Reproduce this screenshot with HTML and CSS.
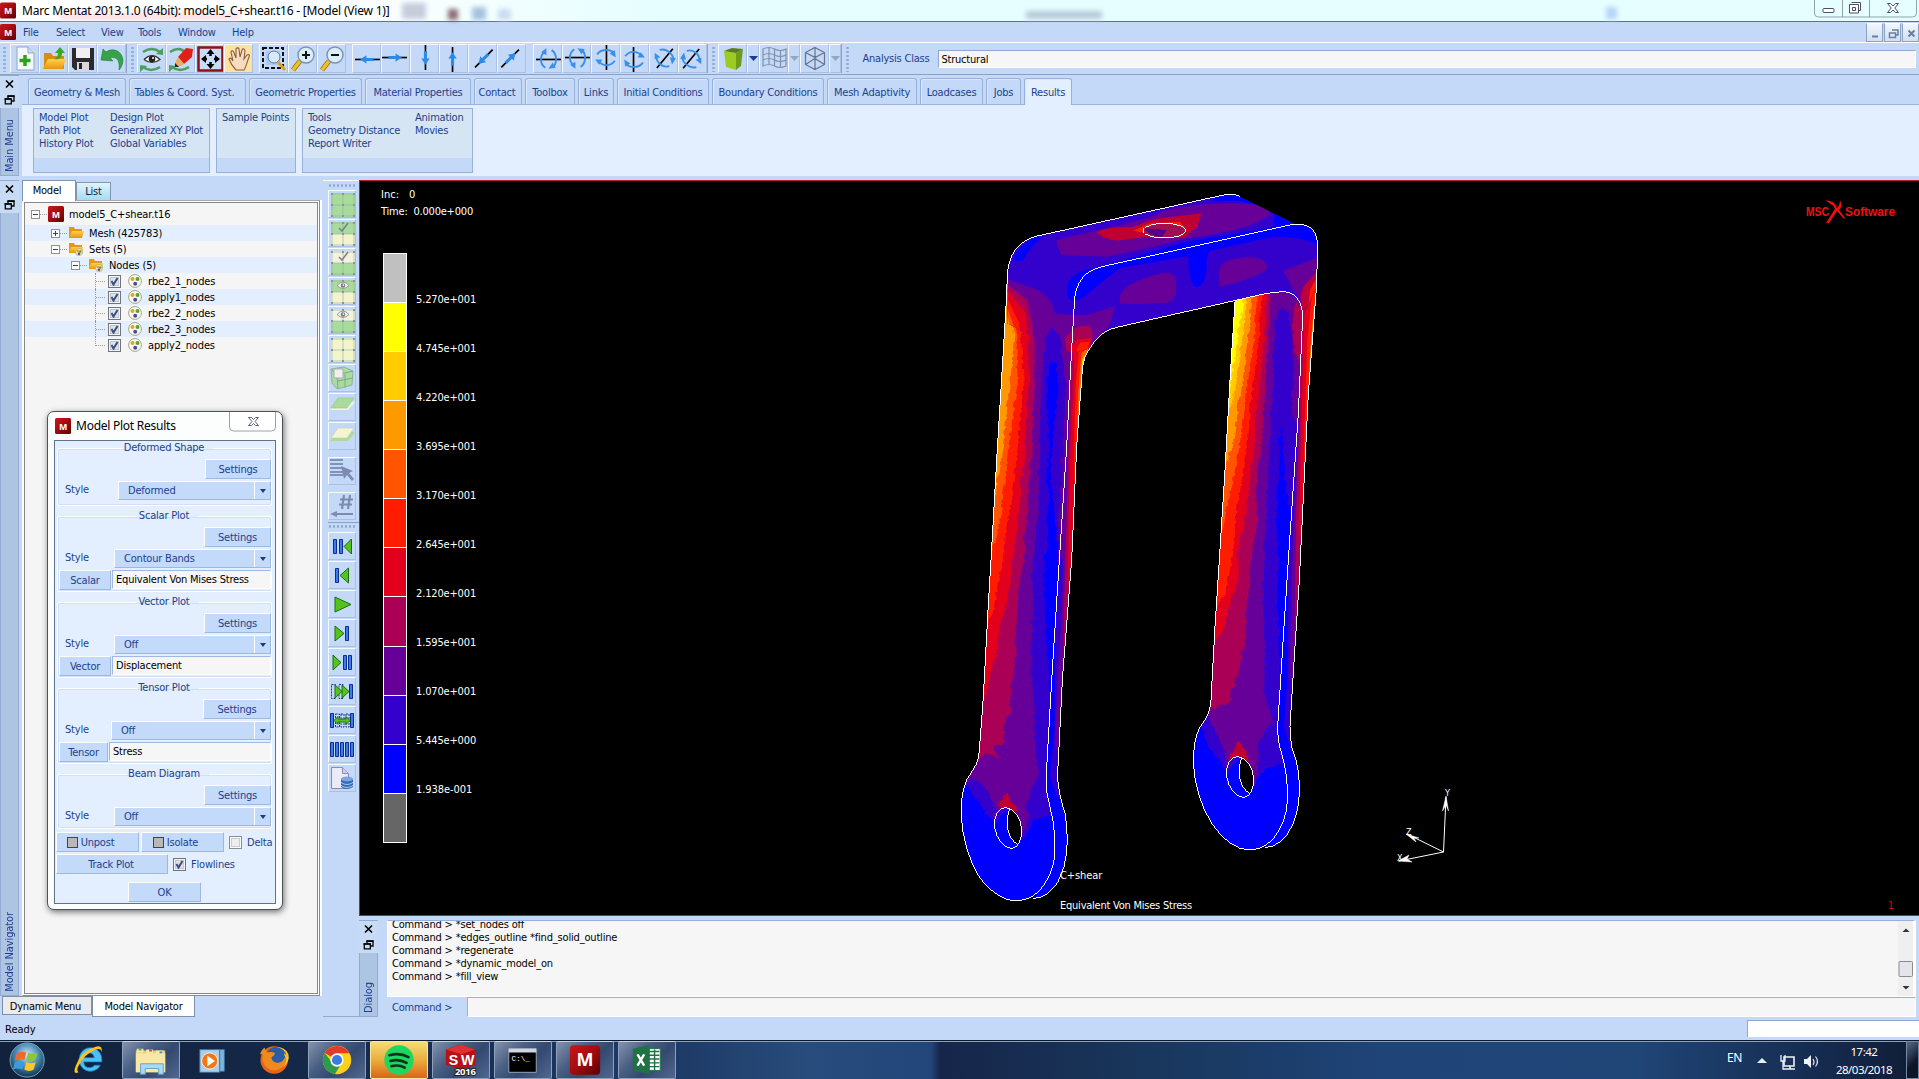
FILE: index.html
```html
<!DOCTYPE html>
<html lang="en">
<head>
<meta charset="utf-8">
<title>Marc Mentat 2013.1.0</title>
<link rel="stylesheet" href="styles.css">
</head>
<body>
<svg class="defs" width="0" height="0">
  <defs>
    <linearGradient id="gRed" x1="0" y1="0" x2="1" y2="1"><stop offset="0" stop-color="#c81818"/><stop offset=".45" stop-color="#a80c10"/><stop offset="1" stop-color="#5c0006"/></linearGradient>
    <linearGradient id="gFolder" x1="0" y1="0" x2="0" y2="1"><stop offset="0" stop-color="#ffd24a"/><stop offset="1" stop-color="#e8940e"/></linearGradient>
    <radialGradient id="gOrb" cx=".5" cy=".35" r=".65"><stop offset="0" stop-color="#cfe8f2"/><stop offset=".5" stop-color="#4c8fb8"/><stop offset="1" stop-color="#0d3350"/></radialGradient>
    <symbol id="m" viewBox="0 0 16 16"><rect width="16" height="16" rx="1.5" fill="url(#gRed)"/><text x="8" y="11.6" text-anchor="middle" font-family="Liberation Sans" font-weight="bold" font-size="9.5" fill="#fff">M</text></symbol>
    <symbol id="restore" viewBox="0 0 10 10"><path d="M3.5 3V1h6v5h-2M.8 3.8h6v5h-6z" fill="none" stroke="#000" stroke-width="1.3"/><path d="M3 1.2h7M0 4h7" stroke="#000" stroke-width="1.6"/></symbol>
    <symbol id="close" viewBox="0 0 10 10"><path d="M1.5 1.5l7 7M8.5 1.5l-7 7" stroke="#000" stroke-width="1.6"/></symbol>
    <symbol id="tick" viewBox="0 0 13 13"><rect x=".5" y=".5" width="12" height="12" fill="#f3f3f3" stroke="#70757e"/><rect x="2.5" y="2.5" width="8" height="8" fill="#dfe2e6" stroke="#c3c7cd"/><path d="M3.5 6l2 3.5L9.5 3" fill="none" stroke="#3c4f82" stroke-width="2"/></symbol>
    <symbol id="untick" viewBox="0 0 13 13"><rect x=".5" y=".5" width="12" height="12" fill="#fafafa" stroke="#8a8e94"/><rect x="2.5" y="2.5" width="8" height="8" fill="#eee" stroke="#c9cdd2"/></symbol>
    <symbol id="minus" viewBox="0 0 9 9"><rect x=".5" y=".5" width="8" height="8" fill="#fff" stroke="#919191"/><path d="M2 4.5h5" stroke="#345"/></symbol>
    <symbol id="plus" viewBox="0 0 9 9"><rect x=".5" y=".5" width="8" height="8" fill="#fff" stroke="#919191"/><path d="M2 4.5h5M4.500 2v5" stroke="#345"/></symbol>
    <symbol id="folder" viewBox="0 0 16 14"><path d="M1 12V1h5l1 2h7v9z" fill="#e29a14"/><path d="M1 12L4 5h12l-2 7z" fill="url(#gFolder)"/></symbol>
    <symbol id="folderset" viewBox="0 0 16 14"><path d="M1 11V1h5l1 2h7v8z" fill="#e29a14"/><path d="M1 11L3 5h12l-1 6z" fill="url(#gFolder)"/><circle cx="11" cy="10" r="3.6" fill="#eee6c0" stroke="#b8a860" stroke-width=".7"/><circle cx="9.800" cy="9" r="1.200" fill="#d8a018"/><circle cx="12.300" cy="9.500" r="1.200" fill="#5a9a3a"/><circle cx="11" cy="11.800" r="1.200" fill="#5540a0"/></symbol>
    <symbol id="nodes" viewBox="0 0 14 14"><circle cx="7" cy="7" r="6.400" fill="#fbfbf2" stroke="#a0a488" stroke-width="1"/><circle cx="4.500" cy="5" r="2" fill="#dca81c"/><circle cx="9.500" cy="5" r="2" fill="#57a03a"/><circle cx="7.200" cy="9.700" r="2" fill="#5048a8"/></symbol>
    <symbol id="ax" viewBox="0 0 26 26"><path d="M1 13h24" stroke="#000" stroke-width="1.600"/><path d="M6 13l6-4v2.500h7v3h-7V17z" fill="#2c8ae8"/></symbol>
    <symbol id="rot" viewBox="0 0 26 26"><path d="M1 13h24" stroke="#000" stroke-width="1.600"/><path d="M10 21C4 17 5 9 9 6M16 4c5 3 6 12 1 17" fill="none" stroke="#3a90e8" stroke-width="1.800"/><path d="M11 2v7L6 6z" fill="#3a90e8"/><path d="M13 22l4-6 3 5z" fill="#3a90e8"/></symbol>
    <symbol id="grid" viewBox="0 0 24 24"><path d="M1 1h22v22H1zM12 1v22M1 12h22" fill="none" stroke="#8fb49c" stroke-width=".6"/><path d="M0 0h2v2H0zM11 0h2v2h-2zM22 0h2v2h-2zM0 11h2v2H0zM11 11h2v2h-2zM22 11h2v2h-2zM0 22h2v2H0zM11 22h2v2h-2zM22 22h2v2h-2z" fill="#8a92ae"/></symbol>
    <symbol id="eye" viewBox="0 0 14 8"><path d="M0 4q7-8 14 0q-7 7-14 0" fill="#f4f4f4" stroke="#8c8c8c"/><circle cx="7" cy="4" r="2.600" fill="#777"/><circle cx="7.500" cy="3.500" r="1" fill="#fff"/></symbol>
  </defs>
</svg>

<header class="title">
  <svg class="m16"><use href="#m"/></svg><span>Marc Mentat 2013.1.0 (64bit): model5_C+shear.t16 - [Model (View 1)]</span>
  <i class="ghost g1"></i><i class="ghost g2"></i><i class="ghost g3"></i><i class="ghost g4"></i><i class="ghost g7"></i><i class="ghost g5"></i><i class="ghost g6"></i>
  <svg class="winbtns" width="103" height="18" viewBox="0 0 103 18"><path d="M.5 0v13q0 4 4 4h94q4 0 4-4V0M28.500 0v17M55.500 0v17" fill="none" stroke="#8fa3a8"/><rect x="9" y="8.500" width="11" height="4" rx="1" fill="#fff" stroke="#4a4f66"/><path d="M37.500 2.500h9v8h-2M35.500 4.500h9v8.500h-9zM38.500 7.500h3v3h-3z" fill="#fff" stroke="#4a4f66"/><path d="M73.500 3.500h3l2.500 2.500 2.500-2.500h3L80.800 8l3.700 4.500h-3L79 10l-2.500 2.500h-3L77.200 8z" fill="#fff" stroke="#4a4f66"/></svg>
</header>

<nav class="menu">
  <svg class="m16"><use href="#m"/></svg>
  <span class="mi1">File</span><span class="mi2">Select</span><span class="mi3">View</span><span class="mi4">Tools</span><span class="mi5">Window</span><span class="mi6">Help</span>
  <div class="mdi">
    <svg width="17" height="19"><path d="M5 12.500h6" stroke="#6b7f9c" stroke-width="2"/></svg>
    <svg width="17" height="19"><path d="M7 6h6v5h-2M4.500 9h6v4.500h-6z" fill="none" stroke="#6b7f9c" stroke-width="1.500"/></svg>
    <svg width="17" height="19"><path d="M5.500 6.500l6 6M11.500 6.500l-6 6" stroke="#6b7f9c" stroke-width="2"/></svg>
  </div>
</nav>

<div class="toolbar">
  <i class="grip first"></i>
  <div class="tg">
    <svg class="tb"><path d="M6 2h11l6 6v17H6z" fill="#f4f8fd" stroke="#8ea6c8"/><path d="M17 2v6h6" fill="#cfdcf0" stroke="#8ea6c8"/><path d="M14 10v11M8.500 15.500h11" stroke="#2fa01c" stroke-width="3.500"/></svg>
    <svg class="tb"><path d="M4 24V8h7l2 3h11v13z" fill="#d98d10"/><path d="M3 24l5-10h18l-4 10z" fill="url(#gFolder)"/><path d="M14 14c3-1 4-3 4-6h-3l5-6 5 6h-3c0 5-3 7-8 6z" fill="#3aa62c"/></svg>
    <svg class="tb"><path d="M3 3h22v22H6l-3-3z" fill="#2b2b2f"/><path d="M7 3h14v10H7z" fill="#f0f0f2"/><path d="M8 17h12v8H8z" fill="#d8d8dc"/><path d="M10 18h3v6h-3z" fill="#222"/></svg>
    <svg class="tb"><path d="M3 15L5 4l3 3C15 2 24 6 25 15c0 4-2 8-4 10 1-8-1-14-9-12l3 3z" fill="#38a24a" stroke="#1e7a34" stroke-width=".6"/></svg>
  </div>
  <i class="grip"></i>
  <div class="tg">
    <svg class="tb"><path d="M5 7q9-6 17 0M22 22q-9 6-17 0" fill="none" stroke="#4aa060" stroke-width="2.500"/><path d="M25 3v7l-7-1zM2 27v-7l7 1z" fill="#4aa060"/><path d="M6 14.500q8-8 16 0q-8 6-16 0" fill="#fff" stroke="#333" stroke-width="1.200"/><circle cx="14" cy="14" r="3.300" fill="#222"/><circle cx="15" cy="13" r="1" fill="#fff"/></svg>
    <svg class="tb"><path d="M3 7q9-6 15 0M22 22q-9 6-17 0" fill="none" stroke="#4aa060" stroke-width="2.500"/><path d="M2 27v-7l7 1z" fill="#4aa060"/><path d="M11 12l8-9 7 1-1 8-8 7z" fill="#e02018"/><path d="M11 12l6 7-5 3H8v-4z" fill="#e8b060"/><path d="M8 18v4h4z" fill="#222"/></svg>
    <svg class="tb"><rect x="2.500" y="2.500" width="24" height="23" fill="#c9dcf6" stroke="#8c1018" stroke-width="2.500"/><path d="M14.500 4l4 5h-8zM14.500 24l4-5h-8zM5 14l5-4v8zM24 14l-5-4v8z" fill="#000"/><path d="M14.500 8v3M14.500 17v3M9 14h2M18 14h2" stroke="#000" stroke-width="2.500"/></svg>
    <svg class="tb on"><path d="M11 25c-3-3-6-8-7-11 1-2 3 0 4 2L6 7c1-2 3-1 3 1l2 5V4c1-2 3-1 3 0l1 8 2-7c1-2 3-1 3 1l-1 8 3-4c2-1 3 0 2 2-2 5-3 10-5 13z" fill="#f8dcc0" stroke="#8a6040" stroke-width="1.100"/></svg>
    <i class="gap6"></i>
    <svg class="tb"><path d="M3 3h20v20H3z" fill="none" stroke="#111" stroke-width="2" stroke-dasharray="4 2"/><rect x="6" y="6" width="14" height="14" fill="#a9c9f4"/><circle cx="14" cy="12" r="6" fill="#d8eafa" stroke="#5a7aa8"/><path d="M18 17l7 8" stroke="#e0a020" stroke-width="3"/></svg>
    <svg class="tb"><path d="M11 16l-7 9" stroke="#a07010" stroke-width="5"/><path d="M11 16l-7 9" stroke="#f0c020" stroke-width="3.500"/><circle cx="17" cy="10" r="8" fill="#dceefa" stroke="#7a94b0" stroke-width="1.400"/><path d="M17 6v8M13 10h8" stroke="#111" stroke-width="2"/></svg>
    <svg class="tb"><path d="M11 16l-7 9" stroke="#a07010" stroke-width="5"/><path d="M11 16l-7 9" stroke="#f0c020" stroke-width="3.500"/><circle cx="17" cy="10" r="8" fill="#dceefa" stroke="#7a94b0" stroke-width="1.400"/><path d="M13 10h8" stroke="#111" stroke-width="2"/></svg>
    <i class="gap6"></i>
    <svg class="tb" viewBox="-1 -1 28 28"><use href="#ax"/></svg>
    <svg class="tb" viewBox="-1 -1 28 28"><use href="#ax" transform="rotate(180 13 13)"/></svg>
    <svg class="tb" viewBox="-1 -1 28 28"><use href="#ax" transform="rotate(-90 13 13)"/></svg>
    <svg class="tb" viewBox="-1 -1 28 28"><use href="#ax" transform="rotate(90 13 13)"/></svg>
    <svg class="tb" viewBox="-1 -1 28 28"><use href="#ax" transform="rotate(-45 13 13)"/></svg>
    <svg class="tb" viewBox="-1 -1 28 28"><use href="#ax" transform="rotate(135 13 13)"/></svg>
    <i class="gap6 w7"></i>
    <svg class="tb" viewBox="-1 -1 28 28"><use href="#rot"/></svg>
    <svg class="tb" viewBox="-1 -1 28 28"><use href="#rot" transform="matrix(1 0 0 -1 0 26)"/></svg>
    <svg class="tb" viewBox="-1 -1 28 28"><use href="#rot" transform="rotate(-90 13 13)"/></svg>
    <svg class="tb" viewBox="-1 -1 28 28"><use href="#rot" transform="rotate(90 13 13)"/></svg>
    <svg class="tb" viewBox="-1 -1 28 28"><use href="#rot" transform="rotate(-50 13 13)"/></svg>
    <svg class="tb" viewBox="-1 -1 28 28"><use href="#rot" transform="rotate(130 13 13)"/></svg>
  </div>
  <i class="grip"></i>
  <div class="tg">
    <svg class="tb"><path d="M5 6l12 2v17l-10-3z" fill="#9ccc24"/><path d="M17 8l7-4-2 17-5 4z" fill="#6c9c18"/><path d="M5 6l8-3 11 1-7 4z" fill="#587c1c"/></svg>
    <svg class="td"><path d="M1 11h9l-4.500 5z" fill="#1c3c8c"/></svg>
    <svg class="tb"><path d="M3 4q6-3 11.500 0t11.500 0v17q-6 3-11.500 0T3 21zM9 3v17M14.500 4v17M20.500 5v17M3 10q6-3 11.500 0t11.500 0M3 15q6-3 11.500 0t11.500 0" fill="none" stroke="#8291aa" stroke-width="1.200"/></svg>
    <svg class="td"><path d="M1 11h9l-4.500 5z" fill="#98a4b8"/></svg>
    <svg class="tb"><path d="M14 2.500l9.500 5v12l-9.500 5-9.500-5v-12zM4.500 7.500l9.500 5 9.500-5M14 12.500v12M14 2.500v11l-9.500 6M14 13.500l9.500 6" fill="none" stroke="#66748c" stroke-width="1.200"/></svg>
    <svg class="td"><path d="M1 11h9l-4.500 5z" fill="#98a4b8"/></svg>
  </div>
  <i class="grip"></i>
  <label class="aclabel">Analysis Class</label><div class="acfield">Structural</div>
</div>

<section class="maindock">
  <aside class="side"><svg><use href="#close"/></svg><svg><use href="#restore"/></svg><b>Main Menu</b></aside>
  <div class="ribbon">
    <div class="tabs">
      <span class="t1">Geometry &amp; Mesh</span><span class="t2">Tables &amp; Coord. Syst.</span><span class="t3">Geometric Properties</span><span class="t4">Material Properties</span><span class="t5">Contact</span><span class="t6">Toolbox</span><span class="t7">Links</span><span class="t8">Initial Conditions</span><span class="t9">Boundary Conditions</span><span class="t10">Mesh Adaptivity</span><span class="t11">Loadcases</span><span class="t12">Jobs</span><span class="t13 active">Results</span>
    </div>
    <div class="groups">
      <div class="grp ga"><p>Model Plot<br>Path Plot<br>History Plot</p><p>Design Plot<br>Generalized XY Plot<br>Global Variables</p></div>
      <div class="grp gb"><p>Sample Points</p></div>
      <div class="grp gc"><p>Tools<br>Geometry Distance<br>Report Writer</p><p>Animation<br>Movies</p></div>
    </div>
  </div>
</section>

<main class="work">
  <section class="left">
    <div class="navrow">
      <aside class="side nav"><svg><use href="#close"/></svg><svg><use href="#restore"/></svg><b>Model Navigator</b></aside>
      <div class="navpanel">
        <div class="ntabs"><span class="n1">Model</span><span class="n2">List</span></div>
        <div class="treewrap"><div class="tree">
          <div class="row root"><svg class="ex"><use href="#minus"/></svg><i class="dot"></i><svg class="m16"><use href="#m"/></svg><span>model5_C+shear.t16</span></div>
          <div class="row l1 alt"><svg class="ex"><use href="#plus"/></svg><i class="dot"></i><svg class="fo"><use href="#folder"/></svg><span>Mesh (425783)</span></div>
          <div class="row l1"><svg class="ex"><use href="#minus"/></svg><i class="dot"></i><svg class="fo"><use href="#folderset"/></svg><span>Sets (5)</span></div>
          <div class="row l2 alt"><svg class="ex"><use href="#minus"/></svg><i class="dot"></i><svg class="fo"><use href="#folderset"/></svg><span>Nodes (5)</span></div>
          <div class="row l3"><i class="br"></i><svg class="ck"><use href="#tick"/></svg><svg class="nd"><use href="#nodes"/></svg><span>rbe2_1_nodes</span></div>
          <div class="row l3 alt"><i class="br"></i><svg class="ck"><use href="#tick"/></svg><svg class="nd"><use href="#nodes"/></svg><span>apply1_nodes</span></div>
          <div class="row l3"><i class="br"></i><svg class="ck"><use href="#tick"/></svg><svg class="nd"><use href="#nodes"/></svg><span>rbe2_2_nodes</span></div>
          <div class="row l3 alt"><i class="br"></i><svg class="ck"><use href="#tick"/></svg><svg class="nd"><use href="#nodes"/></svg><span>rbe2_3_nodes</span></div>
          <div class="row l3"><i class="br last"></i><svg class="ck"><use href="#tick"/></svg><svg class="nd"><use href="#nodes"/></svg><span>apply2_nodes</span></div>
        </div></div>
      </div>
    </div>
    <div class="btabs"><span class="b1">Dynamic Menu</span><span class="b2">Model Navigator</span></div>
  </section>

  <section class="tools">
    <i class="hgrip"></i>
    <svg class="vb"><rect x="2" y="2" width="24" height="24" fill="#a9dc9c"/><use href="#grid" x="2" y="2" width="24" height="24"/></svg>
    <svg class="vb"><rect x="2" y="2" width="24" height="12" fill="#a9dc9c"/><rect x="2" y="14" width="24" height="12" fill="#f4f2cf"/><use href="#grid" x="2" y="2" width="24" height="24"/><path d="M10 8l3 3 6-8" fill="none" stroke="#7a8088" stroke-width="1.500"/></svg>
    <svg class="vb"><rect x="2" y="2" width="24" height="12" fill="#f4f2dc"/><rect x="2" y="14" width="24" height="12" fill="#a9dc9c"/><use href="#grid" x="2" y="2" width="24" height="24"/><path d="M10 8l3 3 6-8" fill="none" stroke="#7a8088" stroke-width="1.500"/></svg>
    <svg class="vb"><rect x="2" y="2" width="24" height="12" fill="#a9dc9c"/><rect x="2" y="14" width="24" height="12" fill="#f4f2cf"/><use href="#grid" x="2" y="2" width="24" height="24"/><use href="#eye" x="8" y="4" width="12" height="7"/></svg>
    <svg class="vb"><rect x="2" y="2" width="24" height="12" fill="#f4f2dc"/><rect x="2" y="14" width="24" height="12" fill="#a9dc9c"/><use href="#grid" x="2" y="2" width="24" height="24"/><use href="#eye" x="8" y="4" width="12" height="7"/></svg>
    <svg class="vb"><rect x="2" y="2" width="24" height="24" fill="#f4f4cc"/><use href="#grid" x="2" y="2" width="24" height="24"/></svg>
    <svg class="vb"><path d="M2 4l13-2 9 4-1 14-15 4-5-6z" fill="#a9dc9c" stroke="#8fb49c"/><path d="M3 5l5 5 16-4M8 10l1 13M16 9v14M9 16l15-3" fill="none" stroke="#7fa88c"/><path d="M5 4h9v9H5z" fill="#f0f0ea" stroke="#aab"/></svg>
    <svg class="vb"><path d="M8 8h18l-7 8H1z" fill="#f4f4dc"/><path d="M9 4h16l-7 10H2z" fill="#a9dc9c" stroke="#94c48c" stroke-width=".6"/></svg>
    <svg class="vb"><path d="M8 9h18l-7 9H1z" fill="#a9dc9c"/><path d="M9 5h16l-7 10H2z" fill="#f4f4d4" stroke="#c8ccae" stroke-width=".6"/></svg>
    <i class="vs6"></i>
    <svg class="vb"><path d="M1 2h13M1 6h13M1 10h13M1 14h13M1 17h13" stroke="#8392ba" stroke-width="2"/><path d="M12 8l12 5-4 2 5 6-2 2-5-6-3 4z" fill="#7c8ab4"/></svg>
    <i class="vs6"></i>
    <svg class="vb"><path d="M15 2l-2 14M21 2l-2 14M11 6.500h13M10 11.500h13" stroke="#7c8ab4" stroke-width="2.200"/><path d="M1 21l7-3v2h16v2H8v2z" fill="#7c8ab4"/></svg>
    <i class="vline"></i><i class="hgrip h9"></i>
    <svg class="vb"><path d="M4.500 6.500h3v14h-3zM10.500 6.500h3v14h-3z" class="bl"/><path d="M22.500 6v15L15 13.500z" class="gr"/></svg>
    <svg class="vb"><path d="M6.500 6.500h3v14h-3z" class="bl"/><path d="M19.500 6v15L11 13.500z" class="gr"/></svg>
    <svg class="vb"><path d="M6 6v15l16-7.500z" class="gr"/></svg>
    <svg class="vb"><path d="M6 6v15l9-7.500z" class="gr"/><path d="M16.500 6.500h3v14h-3z" class="bl"/></svg>
    <svg class="vb"><path d="M4 6v15l8-7.500z" class="gr"/><path d="M14.500 6.500h3v14h-3zM19.500 6.500h3v14h-3z" class="bl"/></svg>
    <svg class="vb"><path d="M2.500 6.500h4v14h-4zM10 6.500h4v14h-4z" fill="none" stroke="#123a9c" stroke-dasharray="2 1"/><path d="M6 7v13l7-6.500zM13 7v13l7-6.500z" class="gr"/><path d="M20.500 6.500h3v14h-3z" class="bl"/></svg>
    <svg class="vb"><path d="M1.500 6.500h3v14h-3zM21.500 6.500h3v14h-3z" class="bl"/><path d="M6.500 7h4v13h-4zM12 7h3v13h-3zM17 7h3v13h-3z" fill="none" stroke="#123a9c" stroke-dasharray="2 1"/><path d="M5 13.500l4-4v2.500h8V9.500l4 4-4 4V15H9v2.500z" class="gr"/></svg>
    <svg class="vb"><path d="M1.500 6.500h3v14h-3zM6.500 6.500h3v14h-3zM11.500 6.500h3v14h-3zM16.500 6.500h3v14h-3zM21.500 6.500h3v14h-3z" class="bl"/></svg>
    <svg class="vb"><path d="M2.500 2.500h11l6 6v15h-17z" fill="#eceaf8" stroke="#8c88b8"/><path d="M13.500 2.500v6h6" fill="#d0cce8" stroke="#8c88b8"/><path d="M12 14v8q6 4 12 0v-8z" fill="#3468b8"/><ellipse cx="18" cy="14" rx="6" ry="2.500" fill="#7ca4e0"/><path d="M12 17.500q6 4 12 0M12 20.500q6 4 12 0" fill="none" stroke="#a8c8f0"/></svg>
  </section>

  <section class="right">
    <div class="view">
      <svg width="1559" height="734" viewBox="360 181 1559 734">
        <defs>
          <filter id="jag" x="-5%" y="-5%" width="110%" height="110%" color-interpolation-filters="sRGB"><feTurbulence type="turbulence" baseFrequency=".035" numOctaves="2" seed="4"/><feDisplacementMap in="SourceGraphic" scale="14" xChannelSelector="R" yChannelSelector="G"/></filter>
          <clipPath id="cL"><path d="M262 290L258 380L230 840L213 1140L204 1290L195 1460L188 1580L178 1710Q175 1745 162 1765L140 1800Q123 1840 123 1900Q128 2010 180 2095Q235 2163 290 2163Q345 2160 375 2110Q410 2060 405 1980Q403 1930 390 1880Q378 1840 378 1800L395 1500L418 1140L440 800L463 370L440 250L300 220Z"/></clipPath>
          <clipPath id="cLs"><path d="M463 370L440 800L418 1140L395 1500L378 1800Q378 1840 390 1880Q403 1930 405 1980Q410 2060 375 2110L340 2155Q400 2155 432 2060Q450 1990 435 1900Q412 1830 413 1780L427 1500L455 1140L470 800L487 570Q490 530 510 505Q540 452 590 442L600 380Z"/></clipPath>
          <clipPath id="cR"><path d="M945 362L930 600L915 870L898 1140L885 1340L873 1560Q872 1590 860 1612L838 1645Q820 1680 820 1750Q826 1850 875 1930Q930 2010 990 2010Q1045 2007 1075 1955Q1108 1900 1102 1820Q1100 1770 1085 1720Q1073 1690 1073 1640L1092 1340L1105 1140L1135 700L1148 410Q1145 335 1085 335L1040 340Z"/></clipPath>
          <clipPath id="cRs"><path d="M1148 410L1135 700L1105 1140L1092 1340L1073 1640Q1073 1690 1085 1720Q1100 1770 1102 1820Q1108 1900 1075 1955L1035 2003Q1090 2000 1120 1930Q1145 1870 1136 1780Q1130 1740 1115 1700Q1110 1670 1110 1640L1125 1400L1138 1200L1165 640L1188 340L1193 220L1080 220L1085 335Q1145 345 1148 410Z"/></clipPath>
          <clipPath id="cT"><path d="M264 290Q262 190 352 168L920 43Q945 40 960 50L1125 132Q1185 130 1192 185L1190 320L1148 410Q1145 335 1085 335L1040 340L590 442Q540 452 510 505L458 520L262 430Z"/></clipPath>
        </defs>
        <g transform="translate(920 180) scale(.33333)">
          <g clip-path="url(#cL)"><g filter="url(#jag)">
            <path d="M100 200H500V2200H100z" fill="#f90"/>
            <path d="M262 375L280 460L268 600L245 800L228 900L214 1000H100V2200H500V200H255z" fill="#f50"/>
            <path d="M262 350L285 440L290 600L262 800L240 1000L225 1060L205 1150H100V2200H500V200z" fill="#ff1c00"/>
            <path d="M262 335L298 430L308 600L290 800L270 960L252 1060L245 1140L232 1200L217 1290L195 1340H100V2200H500V200z" fill="#e3001c"/>
            <path d="M262 322L318 400L325 600L312 800L292 1000L275 1130L265 1210L250 1290L232 1360L232 1400L210 1480L190 1550H100V2200H500V200z" fill="#aa0055"/>
            <path d="M262 300L322 360L338 440L338 600L333 800L318 1000L308 1070L312 1120L295 1200L290 1280L280 1370L285 1420L268 1540L270 1590L250 1620V1685L215 1700L238 1730L195 1715L165 1745H100V2200H500V200z" fill="#609"/>
            <path d="M262 200V290L340 325Q390 340 405 400L500 410V200z" fill="#30c"/>
            <path d="M395 440L372 480L365 560L360 640L355 800L350 1000L335 1140L333 1200L338 1290L330 1400L333 1500L340 1620L345 1740L355 1770L330 1820L305 1900L300 1990L500 1980V1500L410 1140L425 800L435 600L410 470z" fill="#30c"/>
            <path d="M388 545L378 600L384 800L375 900L388 950L376 1010L380 1090L370 1140L372 1300L378 1420L388 1540L400 1500L418 1200L408 1100L405 1050L396 960L388 900L392 800L410 620L405 545z" fill="#00f"/>
            <path d="M155 1790L185 1810L225 1880L230 1940L150 1940L120 1820z" fill="#30c"/>
            <path d="M90 1770L145 1820L190 1895L215 1915L228 1950L305 1975L340 1915L385 1900L420 1890V2300H90z" fill="#00f"/>
            <path d="M225 1890L215 1895L225 1960H305L330 1900L300 1870z" fill="#609"/>
            <path d="M255 1833L238 1865L230 1895L294 1895L275 1858z" fill="#c00030"/>
          </g></g>
          <g clip-path="url(#cLs)">
            <path d="M370 350H620V2200H370z" fill="#30c"/>
            <path d="M375 1140L405 1340L403 1650L390 1790L420 1880L460 2000V2200H300V1140z" fill="#00f"/>
            <path d="M400 1850L470 1860V2170H330L380 1900z" fill="#00f"/>
            <path d="M410 420L585 378L570 430L510 510L490 560L455 1140L418 1720L405 1700L412 1500L425 1300L430 1140L400 1100z" fill="#609"/>
            <path d="M435 470Q470 430 510 440Q530 460 510 510L490 560L455 1140L440 1420L430 1400L436 1140L440 1000L448 700L450 560z" fill="#aa0055"/>
            <path d="M458 480L500 470L512 500L490 560L455 1140L444 1220L446 1000L452 800L462 570z" fill="#e3001c"/>
            <path d="M478 500L510 490L470 800L462 920L463 760L468 600z" fill="#ff1c00"/>
            <path d="M484 520L505 500L480 720L472 780L474 650z" fill="#f60"/>
            <path d="M486 540L500 520L480 660z" fill="#fc0"/>
          </g>
          <g clip-path="url(#cR)"><g filter="url(#jag)">
            <path d="M800 330H1160V2020H800z" fill="#ff0"/>
            <path d="M968 330L966 370L953 440L936 560L925 620H800V2100H1200V330z" fill="#fc0"/>
            <path d="M978 330L968 440L948 580L930 680L915 720H800V2100H1200V330z" fill="#f90"/>
            <path d="M992 330L985 440L965 600L940 760L925 830L905 860H800V2100H1200V330z" fill="#f50"/>
            <path d="M1008 330L1000 470L978 600L955 800L935 900L915 980L900 1060H800V2100H1200V330z" fill="#ff1c00"/>
            <path d="M1022 330L1015 470L995 620L975 800L962 900L945 1000L932 1130L925 1180L910 1240L880 1290H800V2100H1200V330z" fill="#e3001c"/>
            <path d="M1035 330L1028 480L1015 620L1000 780L985 900L975 1000L950 1110L950 1200L918 1290L905 1350L880 1380H800V2100H1200V330z" fill="#aa0055"/>
            <path d="M1047 330L1042 480L1030 640L1020 800L1005 940L1010 1010L990 1120L985 1210L975 1300L975 1360L955 1460L940 1520L925 1540L930 1560L890 1580L860 1590H800V2100H1200V330z" fill="#609"/>
            <path d="M1080 375L1060 420L1055 600L1045 800L1035 1000L1028 1140L1025 1250L1032 1400L1030 1540L1055 1620L1020 1670L1005 1740L1000 1830L1130 1800V800L1120 600L1105 400z" fill="#30c"/>
            <path d="M1158 380L1112 360L1105 420L1118 560L1110 700L1142 750z" fill="#609"/><path d="M1158 390L1125 365L1112 440L1122 510L1158 600z" fill="#aa0055"/>
            <path d="M1080 720L1072 900L1065 1010L1072 1140L1070 1280L1080 1480L1100 1400L1115 1040L1092 900z" fill="#00f"/>
            <path d="M858 1600L880 1650L915 1720L920 1800L850 1760L820 1640z" fill="#30c"/>
            <path d="M800 1600L845 1640L860 1690L895 1740L920 1775L1000 1800L1020 1780Q1050 1740 1120 1755V2100H800V1640z" fill="#00f"/>
            <path d="M921 1740L915 1780L925 1815H1001L1018 1740L990 1710z" fill="#609"/>
            <path d="M948 1680L935 1710L928 1742L990 1742L970 1700z" fill="#c00030"/>
          </g></g>
          <g clip-path="url(#cRs)">
            <path d="M1030 200H1200V2020H1030z" fill="#30c"/>
            <path d="M1060 1140L1105 1240L1102 1500L1092 1640L1110 1700L1150 1800V2020H1020V1140z" fill="#00f"/>
            <path d="M1200 235L1090 270L1115 320L1142 370L1135 700L1118 1100L1108 1500L1120 1500L1138 1200L1200 300z" fill="#609"/>
            <path d="M1200 270L1150 320L1140 400L1140 700L1128 1000L1124 1380L1138 1200L1200 300z" fill="#aa0055"/>
            <path d="M1200 265L1158 320L1152 420L1145 700L1136 1080L1160 1000L1200 300z" fill="#e3001c"/>
            <path d="M1200 270L1178 320L1162 480L1155 700L1150 880L1200 400z" fill="#ff1c00"/>
            <path d="M1200 310L1182 380L1170 520L1165 680L1200 440z" fill="#f80"/>
          </g>
          <g clip-path="url(#cT)">
            <path d="M250 30H1200V530H250z" fill="#30c"/>
            <path d="M240 290L340 325Q395 345 405 402L500 406L585 378L572 430L510 510L458 530H240z" fill="#609"/>
            <path d="M250 305L322 360L338 440V530H240z" fill="#aa0055"/><path d="M250 315L318 400L325 530H240z" fill="#e3001c"/><path d="M250 330L298 430L306 530H240z" fill="#ff1c00"/><path d="M250 350L282 440L286 530H240z" fill="#f50"/><path d="M250 365L268 430L272 530H240z" fill="#f90"/>
            <path d="M395 440L372 480L370 530H432L420 470z" fill="#30c"/>
            <path d="M435 480Q460 430 508 438Q532 465 500 530H440z" fill="#aa0055"/><path d="M452 500L475 478L512 475L500 530H452z" fill="#e3001c"/><path d="M470 510L480 488L508 485L500 530H470z" fill="#ff1c00"/>
            <path d="M285 245Q270 220 350 165L365 175Q330 200 310 240z" fill="#00f"/>
            <path d="M410 180Q540 150 680 115L740 90Q860 65 980 70Q1050 80 1050 103Q1000 150 800 175Q600 225 560 230L425 225Q410 200 410 180z" fill="#609"/>
            <path d="M530 160Q540 140 640 140L700 118L845 100L830 140L795 172L700 168L590 182Q555 178 530 160z" fill="#c00030"/>
            <path d="M640 152L690 130L780 125L800 150L780 172L700 174L680 160z" fill="#f42000"/>
            <path d="M1065 100L1125 132Q1185 130 1193 195Q1150 170 1060 170L870 212Q858 225 860 260Q860 310 830 322Q805 315 805 228L600 265Q540 310 500 345Q450 380 443 345Q430 280 520 265L800 185L1060 140z" fill="#00f"/>
            <path d="M860 20H960L1010 75L955 62L880 62z" fill="#00f"/>
            <path d="M600 370Q590 330 650 305Q750 260 765 290Q780 360 740 368Q640 375 600 370z" fill="#609"/>
            <path d="M900 320Q885 250 930 240Q1030 215 1043 262Q1030 290 900 320z" fill="#609"/>
            <path d="M1200 230L1090 272L1115 320L1142 370L1150 420H1200z" fill="#609"/><path d="M1200 265L1150 320L1142 350L1150 420H1200z" fill="#c00038"/><path d="M1200 275L1170 330L1160 420H1200z" fill="#ff1c00"/>
          </g>
          <ellipse cx="733" cy="152" rx="62" ry="21" fill="#a01050"/><path d="M675 145L740 150L725 172Q680 165 675 145" fill="#508"/>
          <path d="M255 1882Q222 1890 223 1940Q235 2000 275 2006Q305 2000 305 1950Q300 1890 255 1882M951 1729Q918 1737 919 1787Q931 1847 971 1853Q1001 1847 1001 1797Q996 1737 951 1729" fill="#00f"/>
          <path d="M255 1882Q222 1890 223 1940L240 1910L268 1884zM951 1729Q918 1737 919 1787L936 1757L964 1731z" fill="#30c"/>
          <path d="M270 1884Q262 1900 262 1940Q268 1980 293 1993Q305 1980 305 1945Q300 1905 270 1884z"/><path d="M966 1731Q958 1747 958 1787Q964 1827 989 1840Q1001 1827 1001 1792Q996 1752 966 1731z"/>
          <g fill="none" stroke="#fff" stroke-width="3" shape-rendering="crispEdges">
            <path d="M262 290L258 380L230 840L213 1140L204 1290L195 1460L188 1580L178 1710Q175 1745 162 1765L140 1800Q123 1840 123 1900Q128 2010 180 2095Q235 2163 290 2163Q345 2160 375 2110Q410 2060 405 1980Q403 1930 390 1880Q378 1840 378 1800L395 1500L418 1140L440 800L452 560L463 370Q465 275 555 258L1100 137Q1185 118 1192 185L1193 220L1188 340L1165 640L1138 1200L1125 1400L1110 1640Q1110 1670 1115 1700Q1130 1740 1136 1780Q1145 1870 1120 1930Q1090 2000 1035 2003"/>
            <path d="M262 290Q265 190 352 168L920 43Q945 40 960 50"/>
            <path d="M340 2155Q400 2155 432 2060Q450 1990 435 1900Q412 1830 413 1780L427 1500L455 1140L470 800L487 570Q490 530 510 505Q540 452 590 442L1040 340L1085 335Q1145 335 1148 410L1135 700L1105 1140L1092 1340L1073 1640Q1073 1690 1085 1720Q1100 1770 1102 1820Q1108 1900 1075 1955Q1045 2007 990 2010Q930 2010 875 1930Q826 1850 820 1750Q820 1680 838 1645L860 1612Q872 1590 873 1560L885 1340L898 1140L915 870L930 600L945 365"/>
            <ellipse cx="733" cy="152" rx="64" ry="22"/>
            <path d="M255 1882Q222 1890 223 1940Q235 2000 275 2006Q305 2000 305 1950Q300 1890 255 1882M270 1884Q262 1900 262 1940Q268 1980 293 1993"/>
            <path d="M951 1729Q918 1737 919 1787Q931 1847 971 1853Q1001 1847 1001 1797Q996 1737 951 1729M966 1731Q958 1747 958 1787Q964 1827 989 1840"/>
          </g>
        </g>
        <g stroke="#fff" shape-rendering="crispEdges">
          <rect x="383.500" y="253.500" width="23" height="49" fill="#c0c0c0"/><rect x="383.500" y="302.500" width="23" height="49" fill="#ff0"/><rect x="383.500" y="351.500" width="23" height="49" fill="#fc0"/><rect x="383.500" y="400.500" width="23" height="49" fill="#f90"/><rect x="383.500" y="449.500" width="23" height="49" fill="#f50"/><rect x="383.500" y="498.500" width="23" height="49" fill="#ff1c00"/><rect x="383.500" y="547.500" width="23" height="49" fill="#e3001c"/><rect x="383.500" y="596.500" width="23" height="50" fill="#aa0055"/><rect x="383.500" y="646.500" width="23" height="49" fill="#609"/><rect x="383.500" y="695.500" width="23" height="49" fill="#30c"/><rect x="383.500" y="744.500" width="23" height="49" fill="#00f"/><rect x="383.500" y="793.500" width="23" height="49" fill="#666"/>
        </g>
        <g class="vt">
          <text x="381" y="198" textLength="18">Inc:</text><text x="409" y="198">0</text><text x="381" y="215" textLength="92">Time:&#160; 0.000e+000</text>
          <text x="416" y="303" textLength="60">5.270e+001</text><text x="416" y="352" textLength="60">4.745e+001</text><text x="416" y="401" textLength="60">4.220e+001</text><text x="416" y="450" textLength="60">3.695e+001</text><text x="416" y="499" textLength="60">3.170e+001</text><text x="416" y="548" textLength="60">2.645e+001</text><text x="416" y="597" textLength="60">2.120e+001</text><text x="416" y="646" textLength="60">1.595e+001</text><text x="416" y="695" textLength="60">1.070e+001</text><text x="416" y="744" textLength="60">5.445e+000</text><text x="416" y="793" textLength="56">1.938e-001</text>
          <text x="1060" y="879" textLength="42">C+shear</text><text x="1060" y="909" textLength="132">Equivalent Von Mises Stress</text>
          <text x="1445" y="796" class="sm">Y</text><text x="1406" y="835" class="sm">Z</text><text x="1397" y="861" class="sm">X</text>
          <text x="1888" y="909" class="red">1</text>
        </g>
        <path d="M1443.500 852L1446 797M1443.500 852L1407 834M1443.500 852L1399 861" stroke="#fff"/>
        <path d="M1446 796l-3.500 15 3.500-6 2.500 6zM1406 834l13 4-5 0 2 4zM1398 861l11-6-2 4 5 3z" fill="#fff" stroke="#fff" stroke-width=".5"/>
        <g class="msc"><text x="1806" y="216" textLength="23" lengthAdjust="spacingAndGlyphs">MSC</text><text x="1845" y="216" textLength="50" lengthAdjust="spacingAndGlyphs">Software</text></g>
        <path d="M1825 200l8 2 4 5-5-2zM1840 200q3 7-1 10l6 8-1 1-7-8-8 12h-3l9-14-3-6 5 5q3-3 3-8z" fill="#f01010"/>
      </svg>
    </div>
    <div class="dlg">
      <aside class="side dl"><svg><use href="#close"/></svg><svg><use href="#restore"/></svg><b>Dialog</b></aside>
      <div class="dcol">
        <div class="log"><div class="lines">Command &gt; *set_nodes off<br>Command &gt; *edges_outline *find_solid_outline<br>Command &gt; *regenerate<br>Command &gt; *dynamic_model_on<br>Command &gt; *fill_view</div>
          <svg class="sb" width="15" height="76"><path d="M4.500 11h7L8 7.500z" fill="#333"/><path d="M4.500 65h7L8 68.500z" fill="#333"/><rect x="1" y="40.500" width="13.500" height="15" rx="1" fill="#e4e4ea" stroke="#8c8c90"/></svg></div>
        <div class="cmd"><span>Command &gt;</span><i></i></div>
      </div>
    </div>
  </section>
</main>

<footer class="status"><span>Ready</span><i></i></footer>

<div class="taskbar">
  <svg class="tk nb s1" viewBox="0 0 60 38"><circle cx="27" cy="19" r="18" fill="url(#gOrb)" stroke="#7fa9bf"/><path d="M16 12q5-3 10-1l-2 8q-5-2-10 1z" fill="#ee6a2a"/><path d="M28 11q5 3 10 0l-2 8q-5 3-10 0z" fill="#8cc63c"/><path d="M14 21q5-2 10 0l-2 8q-5-2-10 0z" fill="#3c9ae0"/><path d="M26 21q5 3 10 0l-2 8q-5 3-10 0z" fill="#fcc828"/></svg>
  <svg class="tk nb s2" viewBox="0 0 60 38"><path d="M41 24.500a12 12.500 0 1 1 1.500-6v2.500H23.500q0 6 6 6 4 0 5-2.500zM23.500 16.500h11q-1-5-5.500-5t-5.500 5" fill="#4cc0f4" stroke="#1878c0" stroke-width=".8"/><path d="M18 32q-7 3-3-7Q20 10 36 5q8-2 6 6 0-5-6-3Q23 13 17 27q-1 4 1 5" fill="#fcc41c"/></svg>
  <svg class="tk s3" viewBox="0 0 58 38"><path d="M13 9h31v23H13z" fill="#e8cc78"/><path d="M14 7h7v4h-7zM24 8h7v4h-7zM34 9h8v4h-8z" fill="#f6eab0"/><path d="M13 12h31v20H13z" fill="#f8e8a4"/><path d="M16 7h3v2h-3z" fill="#48a848"/><path d="M27 8h3v2h-3z" fill="#c84848"/><path d="M38 10h3v2h-3z" fill="#4888d0"/><path d="M18 34V23h24v11h-5v-6H23v6z" fill="#a8d8f4" stroke="#6aa0c8"/></svg>
  <svg class="tk nb s4" viewBox="0 0 60 38"><path d="M17 8h24v23H17z" fill="#7cb4dc" stroke="#3a6c98"/><path d="M15 8h21v24H15z" fill="#a8d0ec" stroke="#3a6c98"/><circle cx="25.500" cy="20" r="8.500" fill="#f07818" stroke="#fff" stroke-width=".8"/><path d="M23 14.500v11l8-5.500z" fill="#fff"/></svg>
  <svg class="tk nb s5" viewBox="0 0 60 38"><circle cx="26" cy="19" r="14.500" fill="#e8641c"/><circle cx="28" cy="15.500" r="10.500" fill="#2a5ca8"/><path d="M11 13q2-6 5-7 0 3 3 5 5-1 8 1-1 3-4 4 1 6 7 6 6-1 7-6 3 6-3 11-8 6-16 0-6-6-4-14z" fill="#f08a1c"/><path d="M27 5q10 1 13 11-1-3-4-4 5 9-1 15 8-6 6-14Q38 5 27 5" fill="#fcc424"/></svg>
  <svg class="tk s6" viewBox="0 0 58 38"><circle cx="29" cy="19" r="15" fill="#fcd018"/><path d="M29 19L16 11.500A15 15 0 0 1 42 12H29z" fill="#e03c2c"/><path d="M16 11.500a15 15 0 0 0 11 22.400L34 22l-10 0z" fill="#2c9c4c"/><circle cx="29" cy="19" r="7" fill="#fff"/><circle cx="29" cy="19" r="5.400" fill="#3c7ce0"/></svg>
  <svg class="tk spot s7" viewBox="0 0 58 38"><circle cx="29" cy="19" r="15.500" fill="#1ed760"/><path d="M19 14q11-3 20 2M20 20q9-2.500 17 2M21 25.500q8-2 14 1.500" fill="none" stroke="#14301c" stroke-width="2.800" stroke-linecap="round"/></svg>
  <svg class="tk s8" viewBox="0 0 58 38"><path d="M13 8l16-5 15 5v16l-15 5-16-5z" fill="#b81018"/><path d="M13 8l16-5 15 5-15 5z" fill="#e03030"/><text x="21" y="24" class="sw">S</text><text x="36" y="24" class="sw">W</text><text x="33.500" y="34.500" class="y16">2016</text></svg>
  <svg class="tk s9" viewBox="0 0 58 38"><path d="M14 7h29v25H14z" fill="#000" stroke="#9aa6ba"/><path d="M14 7h29v4H14z" fill="#d0d6e0"/><text x="17" y="20" class="con">C:\_</text></svg>
  <svg class="tk s10" viewBox="0 0 58 38"><rect x="13" y="3.500" width="32" height="31" rx="4" fill="url(#gRed)"/><text x="29" y="25" class="bm">M</text></svg>
  <svg class="tk s11" viewBox="0 0 58 38"><path d="M28 7h15v23H28z" fill="#fff" stroke="#1f7244"/><path d="M30 10h12M30 14h12M30 18h12M30 22h12M30 26h12M37 8v22" stroke="#1f7244" stroke-width="1.500"/><path d="M14 7l18-4v31l-18-4z" fill="#1f7244"/><path d="M19 13l7 12M26 13l-7 12" stroke="#fff" stroke-width="2.500"/></svg>
  <div class="tray"><span>EN</span>
    <svg width="110" height="38" viewBox="1752 1041 110 38"><path d="M1756 1063l5-5 5 5z" fill="#e8eef8"/><path d="M1783 1057h10v9h-10zM1785 1069h9M1789 1066v3" fill="none" stroke="#eef2fa" stroke-width="1.600"/><path d="M1780 1055v6h4v-6M1782 1061v8h3" fill="none" stroke="#eef2fa" stroke-width="1.300"/><path d="M1803 1059h3l4-4v13l-4-4h-3z" fill="#eef2fa"/><path d="M1812 1059q2 3 0 6M1814.500 1056.500q4 5 0 10" fill="none" stroke="#dde4f0" stroke-width="1.200"/></svg>
    <p>17:42<br>28/03/2018</p><i></i></div>
</div>

<section class="popup">
  <div class="pt"><svg class="m16"><use href="#m"/></svg><span>Model Plot Results</span><svg class="px" width="47" height="20"><path d="M.5 0v15q0 4 4 4h38q4 0 4-4V0" fill="#fff" stroke="#9aa0a8"/><path d="M19.500 5.500h3l2 2 2-2h3l-3.500 4 3.500 4h-3l-2-2-2 2h-3l3.500-4z" fill="#fff" stroke="#5a5f6c"/></svg></div>
  <div class="pb">
    <fieldset class="fs d1"><legend>Deformed Shape</legend><button class="set">Settings</button><div class="st"><span>Style</span><div class="cb">Deformed</div></div></fieldset>
    <fieldset class="fs d2"><legend>Scalar Plot</legend><button class="set">Settings</button><div class="st"><span>Style</span><div class="cb">Contour Bands</div></div><div class="vr"><button>Scalar</button><div class="in">Equivalent Von Mises Stress</div></div></fieldset>
    <fieldset class="fs d2"><legend>Vector Plot</legend><button class="set">Settings</button><div class="st"><span>Style</span><div class="cb">Off</div></div><div class="vr"><button>Vector</button><div class="in">Displacement</div></div></fieldset>
    <fieldset class="fs d2 d3"><legend>Tensor Plot</legend><button class="set">Settings</button><div class="st"><span>Style</span><div class="cb">Off</div></div><div class="vr"><button>Tensor</button><div class="in">Stress</div></div></fieldset>
    <fieldset class="fs d4"><legend>Beam Diagram</legend><button class="set">Settings</button><div class="st"><span>Style</span><div class="cb">Off</div></div></fieldset>
    <div class="br1"><button><i></i>Unpost</button><button><i></i>Isolate</button><svg class="ck"><use href="#untick"/></svg><span>Delta</span></div>
    <div class="br2"><button>Track Plot</button><svg class="ck"><use href="#tick"/></svg><span>Flowlines</span></div>
    <button class="ok">OK</button>
  </div>
</section>
</body>
</html>
```
FILE: styles.css
```css
* { box-sizing: border-box; }
body {
  margin: 0; width: 1919px; height: 1079px; overflow: hidden; position: relative;
  display: flex; flex-direction: column; background: #c3d9f7;
  font: 11px/13px "DejaVu Sans Condensed", "DejaVu Sans", sans-serif; letter-spacing: -.22px; color: #1c3f8f;
}
svg { display: block; flex: none; }
i { display: block; flex: none; }
p { margin: 0; }
.defs { position: absolute; }
.m16 { width: 16px; height: 16px; }

.title { height: 22px; border-bottom: 1px solid #5f7480; display: flex; align-items: center; gap: 6px; color: #000; position: relative;
  background: linear-gradient(90deg, #fff 0, #fbfeff 20%, #e6feff 34%, #e6feff 100%); font: 12px/20px "Noto Sans", sans-serif; letter-spacing: -.2px; }
.title .m16 { height: 17px; }
.title span { position: relative; z-index: 1; padding-top: 1px; }
.winbtns { position: absolute; right: 2px; top: 0; }
.ghost { position: absolute; filter: blur(2.500px); }
.g1 { left: 60px; top: 13px; width: 180px; height: 7px; background: #fbdfe4; }
.g2 { left: 402px; top: 3px; width: 24px; height: 16px; background: #c5cddd; }
.g3 { left: 448px; top: 9px; width: 10px; height: 11px; background: #8a6a74; }
.g4 { left: 472px; top: 7px; width: 14px; height: 13px; background: #a6c2de; }
.g7 { left: 498px; top: 9px; width: 13px; height: 11px; background: #cbdbf0; }
.g5 { left: 1026px; top: 11px; width: 76px; height: 8px; background: #b7c9da; }
.g6 { left: 1606px; top: 7px; width: 11px; height: 12px; background: #b4d4fa; }

.menu { height: 21px; border-bottom: 1px solid #fff; display: flex; align-items: center; }
.menu span { flex: none; }
.mi1 { margin-left: 7px; width: 33px; } .mi2 { width: 45px; } .mi3 { width: 37px; } .mi4 { width: 40px; } .mi5 { width: 54px; }
.mdi { margin-left: auto; display: flex; gap: 1px; }
.mdi svg { border: 1px solid #8ba3c4; border-top-color: #fff; background: linear-gradient(#f2f7fd, #cfdff4); }

.toolbar { height: 32px; border-bottom: 1px solid #8aa2c8; display: flex; align-items: center; }
.grip { width: 8px; height: 26px; background: radial-gradient(circle, #8ea9d2 1px, transparent 1.500px) 1px 0 / 5px 4px repeat-y; }
.grip.first { width: 9px; margin-left: .5px; }
.tg { display: flex; border-right: 1px solid #8aa2c8; margin-right: 2px; }
.tb { width: 29px; height: 29px; border: 1px solid; border-color: #f4f9ff #a9c0e2 #a9c0e2 #f4f9ff; }
.td { width: 12px; height: 29px; border: 1px solid; border-color: #f4f9ff #a9c0e2 #a9c0e2 #f4f9ff; }
.tb.on { background: #ffe1a0; }
.gap6 { width: 6px; }
.w7 { width: 7px; }
.aclabel { margin-left: 11px; width: 75px; flex: none; }
.acfield { flex: 1; height: 18px; margin-right: 3px; background: #f6f6f6; border: 1px solid #fff; border-top-color: #8eaad2; border-left-color: #8eaad2; color: #000; padding: 2px 3px; line-height: 13px; }

.maindock { height: 101px; display: flex; }
.side { width: 19px; background: #aec4e3; border: 1px solid #94abd0; display: flex; flex-direction: column; align-items: center; position: relative; flex: none; }
.side svg { width: 19px; height: 16px; padding: 3px 4px; background: #c8dbf5; }
.side b { position: absolute; bottom: 3px; left: 2px; writing-mode: vertical-rl; transform: rotate(180deg); font-weight: normal; letter-spacing: -.1px; white-space: nowrap; }
.ribbon { margin-left: 3px; flex: 1; background: #e3effe; }
.tabs { height: 30px; background: #c3d9f7; border-bottom: 1px solid #9ab3db; padding: 3px 0 0 6px; display: flex; gap: 3px; }
.tabs span { height: 26px; line-height: 27px; border: 1px solid #98b1da; border-bottom: 0; border-radius: 3px 3px 0 0; text-align: center; flex: none; white-space: nowrap; box-shadow: inset 1px 1px #dbe8fb; }
.tabs .t2 { padding-right: 6px; } .tabs .t5 { padding-right: 2px; }
.tabs .active { background: #e3effe; height: 27px; }
.t1 { width: 98px; } .t2 { width: 117px; } .t3 { width: 113px; } .t4 { width: 106px; } .t5 { width: 48px; } .t6 { width: 50px; } .t7 { width: 36px; } .t8 { width: 92px; } .t9 { width: 112px; } .t10 { width: 90px; } .t11 { width: 63px; } .t12 { width: 35px; } .t13 { width: 48px; }
.groups { display: flex; gap: 6px; padding: 3px 0 0 11px; }
.grp { height: 65px; border: 1px solid #98b1da; background: linear-gradient(#d6e5f3 49px, #c3d9f7 49px); padding: 2px 5px; display: flex; }
.ga { width: 177px; } .ga p:first-child { width: 71px; }
.gb { width: 80px; }
.gc { width: 171px; } .gc p:first-child { width: 107px; }
.grp p { flex: none; white-space: nowrap; }

.work { height: 841px; padding-top: 4px; display: flex; }
.left { width: 323px; flex: none; }
.navrow { height: 816px; display: flex; }
.navpanel { margin-left: 3px; width: 301px; display: flex; flex-direction: column; }
.ntabs { height: 20px; display: flex; align-items: flex-end; color: #000; }
.ntabs span { text-align: center; border: 1px solid #8096b0; border-bottom: 0; }
.n1 { width: 54px; height: 21px; background: #fff; line-height: 20px; margin-bottom: -1px; z-index: 1; padding-right: 4px; }
.ntabs .n2 { width: 35px; height: 18px; background: linear-gradient(#e0f4fc, #a4dcf2); line-height: 17px; color: #124; }
.treewrap { flex: 1; margin-right: 3px; background: #fff; border: 1px solid #8c8c90; border-top-color: #a8a8b0; border-left: 1px solid #fff; padding: 1px; box-shadow: 2px 0 #fff; }
.tree { height: 100%; border: 1px solid #88888c; background: #f5f5f5; color: #000; }
.row { height: 16px; display: flex; align-items: center; white-space: nowrap; letter-spacing: -.12px; }
.row span { padding-top: 1px; }
.alt { background: #e3efff; }
.root { height: 22px; padding-left: 6px; }
.root .dot { width: 8px; } .root span { margin-left: 5px; }
.l1 { padding-left: 26px; } .l2 { padding-left: 46px; }
.l1 .dot, .l2 .dot { width: 8px; }
.l1 span, .l2 span { margin-left: 5px; }
.ex { width: 9px; height: 9px; }
.dot { height: 1px; background: repeating-linear-gradient(90deg, #999 0 1px, transparent 1px 2px); }
.fo { width: 16px; height: 14px; }
.ck { width: 13px; height: 13px; }
.nd { width: 14px; height: 14px; margin: 0 6px 0 7px; }
.l3 { padding-left: 70px; }
.br { width: 10px; height: 16px; margin-right: 3px; border-left: 1px dotted #999; background: repeating-linear-gradient(90deg, #999 0 1px, transparent 1px 2px) 0 8px / 100% 1px no-repeat; }
.br.last { height: 9px; align-self: flex-start; }
.btabs { display: flex; color: #000; padding-left: 2px; }
.btabs span { text-align: center; border: 1px solid #7c8ea8; }
.b1 { width: 90px; height: 19px; line-height: 19px; background: #e9ebef; padding-right: 3px; }
.b2 { width: 103px; height: 21px; line-height: 22px; background: #fff; border-top: 0 !important; }

.tools { width: 36px; padding: 1px 0 0 5px; border-top: 1px solid #fff; flex: none; border-bottom: 1px solid #94abd0; }
.hgrip { width: 28px; height: 8px; background: radial-gradient(circle, #8ea9d2 1px, transparent 1.500px) 0 1px / 4px 5px repeat-x; }
.h9 { height: 9px; }
.vb { width: 28px; height: 28px; margin-bottom: 1px; border: 1px solid; border-color: #f8fbff #a9c0e2 #a9c0e2 #f8fbff; }
.bl { fill: #3c7ce8; stroke: #0c2c94; }
.gr { fill: #54c41c; stroke: #1c6c14; }
.vs6 { height: 6px; }
.vline { height: 2px; border-bottom: 1px solid #8aa2c8; }

.right { flex: 1; display: flex; flex-direction: column; }
.view { height: 736px; background: #000; border: 1px solid #b41e24; border-right: 0; }
.vt { fill: #fff; font: 11px "DejaVu Sans Condensed", sans-serif; letter-spacing: -.2px; }
.sm { font-size: 9px; }
.red { fill: #d01010; font-size: 10px; }
.msc { fill: #f01010; font: bold 13px "Liberation Sans", sans-serif; letter-spacing: 0; }
.dlg { flex: 1; margin-top: 4px; display: flex; }
.dcol { margin-left: 9px; width: 1529px; display: flex; flex-direction: column; }
.log { height: 77px; background: #f6f6f6; border: 1px solid #fff; border-top-color: #98b1da; border-right-width: 3px; display: flex; justify-content: space-between; overflow: hidden; color: #000; }
.lines { padding: 0 0 0 4px; margin-top: -3px; letter-spacing: -.18px; }
.sb { background: #efefef; }
.cmd { display: flex; height: 20px; align-items: center; letter-spacing: -.22px; }
.cmd span { width: 80px; padding-left: 5px; }
.cmd i { flex: 1; height: 20px; background: #f6f6f6; border: 1px solid #fff; border-top-color: #98b1da; border-left-color: #98b1da; }

.status { height: 23px; display: flex; align-items: center; color: #000; padding-left: 5px; }
.status span { padding-top: 1px; letter-spacing: 0; }
.status i { margin-left: auto; width: 172px; height: 17px; background: #fff; border: 1px solid #8eaad2; border-right: 0; border-bottom: 0; }

.taskbar { height: 39px; display: flex; position: relative; gap: 4px; border-top: 1px solid #0c1a30; box-shadow: inset 0 1px #8ba2bd;
  background: linear-gradient(90deg, #12223c 0, #16294a 18%, #1f3c68 36%, #284c7c 42%, #22467a 48.500%, #16264a 49%, #183458 58%, #1f4478 72%, #204678 85%, #14284a 96%, #0f1c34); }
.tk { width: 58px; height: 38px; border: 1px solid #8da0bc; border-top-color: #c8d4e4; border-radius: 2px; background: linear-gradient(135deg, #8493ad 0, #4a5f84 35%, #34496f 60%, #50678f 100%); }
.tk.nb { background: none; border-color: transparent; width: 60px; }
.tk.s1 { margin-right: -4px; }
.tk.s2 { margin-right: -2px; } .tk.s4 { margin-right: 0; } .tk.s5 { margin-right: -4px; }
.tk.spot { background: linear-gradient(#f6dc74, #e8a838 55%, #d8641c); border-color: #f8e8a0; }
.sw { font: bold 15px "Liberation Sans", sans-serif; fill: #fff; text-anchor: middle; letter-spacing: 0; }
.y16 { font: bold 10px "Open Sans", sans-serif; fill: #fff; text-anchor: middle; letter-spacing: -.3px; stroke: #222; stroke-width: 2px; paint-order: stroke; }
.con { font: 8px "Liberation Mono", monospace; fill: #fff; letter-spacing: 0; }
.bm { font: bold 19px "Open Sans", sans-serif; fill: #fff; text-anchor: middle; letter-spacing: 0; }
.tray { margin-left: auto; display: flex; align-items: center; color: #fff; font: 12px/18px "Noto Sans", sans-serif; letter-spacing: -.3px; }
.tray span { width: 26px; margin-top: -4px; }
.tray p { width: 66px; text-align: center; margin-left: -32px; letter-spacing: -.5px; font-size: 11.500px; padding-top: 2px; }
.tray i { width: 13px; height: 38px; margin-left: 9px; border: 1px solid #7688a2; background: linear-gradient(135deg, #586a88, #0c1626 60%); }

.popup { position: absolute; left: 47px; top: 411px; width: 236px; height: 499px; border: 1px solid #4c5358; border-radius: 7px; background: #fcfefe; padding: 0 6px 6px; box-shadow: 1px 2px 6px rgba(0,0,0,.55); letter-spacing: -.2px; }
.pt { height: 28px; display: flex; align-items: center; gap: 5px; color: #000; font: 12px/16px "Noto Sans", sans-serif; letter-spacing: -.25px; padding-left: 1px; position: relative; }
.px { position: absolute; right: 0; top: 0; }
.pb { height: 464px; border: 1px solid #5f7388; background: #e3effe; padding: 0 1px; display: flex; flex-direction: column; }
.fs { height: 83px; flex: none; margin: 0 2px 3px 1px; padding: 0 0 0 7px; border: 1px solid #fff; box-shadow: inset 0 0 0 1px #d0e0f6; min-width: 0; border-radius: 2px; display: flex; flex-direction: column; }
.fs legend { margin: 0 auto; padding: 0 5px; line-height: 14px; text-align: center; position: relative; left: -4px; }
button { font: inherit; letter-spacing: inherit; color: inherit; background: #c3dafb; border: 1px solid; border-color: #fff #9db9e0 #9db9e0 #fff; padding: 0; margin: 0; height: 20px; display: block; flex: none; }
.d1 { height: 65px; } .d4 { height: 62px; }
.set { width: 67px; margin: 4px 0 2px auto; }
.d1 .set { width: 66px; }
.st { height: 19px; display: flex; justify-content: space-between; line-height: 17px; flex: none; }
.cb { width: 157px; border: 1px solid; border-color: #fff #9db9e0 #9db9e0 #fff; padding-left: 9px; line-height: 17px; position: relative; background: linear-gradient(90deg, transparent calc(100% - 16px), #fff calc(100% - 16px) calc(100% - 15px), transparent calc(100% - 15px)), #c3dafb; }
.cb::after { content: ""; position: absolute; right: 4px; top: 7px; border: 3.500px solid transparent; border-top: 4px solid #1c3c7c; border-bottom: 0; }
.d1 .cb { width: 153px; }
.d3 .set { width: 68px; } .d3 .cb { width: 160px; }
.vr { display: flex; margin: 2px 0 0 -6px; gap: 1px; flex: none; }
.vr button { width: 52px; }
.d3 .vr button { width: 49px; }
.in { flex: 1; height: 19px; background: #f6f6f6; border: 1px solid #fff; border-top-color: #9db9e0; border-left-color: #9db9e0; color: #000; padding-left: 3px; line-height: 18px; white-space: nowrap; }
.br1, .br2 { display: flex; align-items: center; margin-bottom: 2px; }
.br1 button { width: 83px; margin-right: 2px; display: flex; align-items: center; justify-content: center; gap: 3px; padding-right: 14px; }
.br1 button i { width: 11px; height: 11px; background: #b8b8b8; border: 1px solid #444; }
.br1 .ck { margin: 0 5px 0 3px; }
.br2 button { width: 112px; padding-right: 2px; }
.br2 .ck { margin: 0 5px; }
.ok { width: 73px; margin: 6px auto 0 72px; }
```
